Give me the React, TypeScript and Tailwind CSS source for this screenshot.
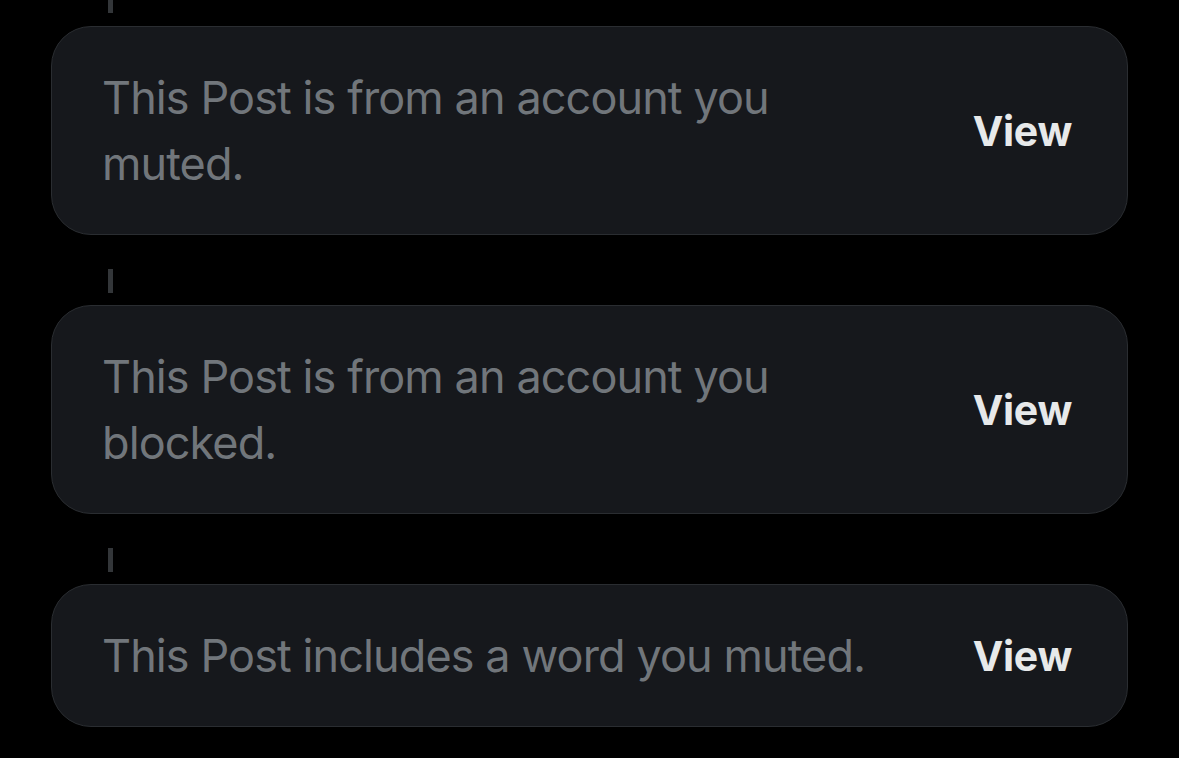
import React from "react";

const items = [
  "This Post is from an account you muted.",
  "This Post is from an account you blocked.",
  "This Post includes a word you muted.",
];

export default function App() {
  return (
    <div
      className="min-h-[758px] w-full bg-black px-[51px]"
      style={{ fontFamily: "Inter, 'Noto Sans', sans-serif" }}
    >
      <div className="ml-[57px] h-[13px] w-[5px] bg-[#333639]" />
      {items.map((t, i) => (
        <div key={i}>
          {i === 0 ? (
            <div className="h-[13px]" />
          ) : (
            <div className="pt-[34px] pb-[12px]">
              <div className="ml-[57px] h-[24px] w-[5px] bg-[#333639]" />
            </div>
          )}
          <div className="flex items-center rounded-[40px] border border-[#2a2d31] bg-[#16181c] py-[37.5px] pl-[50px] pr-[55px]">
            <div className="w-[790px] text-[45px] leading-[66px] tracking-[-0.9px] text-[#71767b]">{t}</div>
            <div className="ml-auto text-[41px] font-bold leading-[66px] tracking-[-0.3px] text-[#e7e9ea]">View</div>
          </div>
        </div>
      ))}
    </div>
  );
}
